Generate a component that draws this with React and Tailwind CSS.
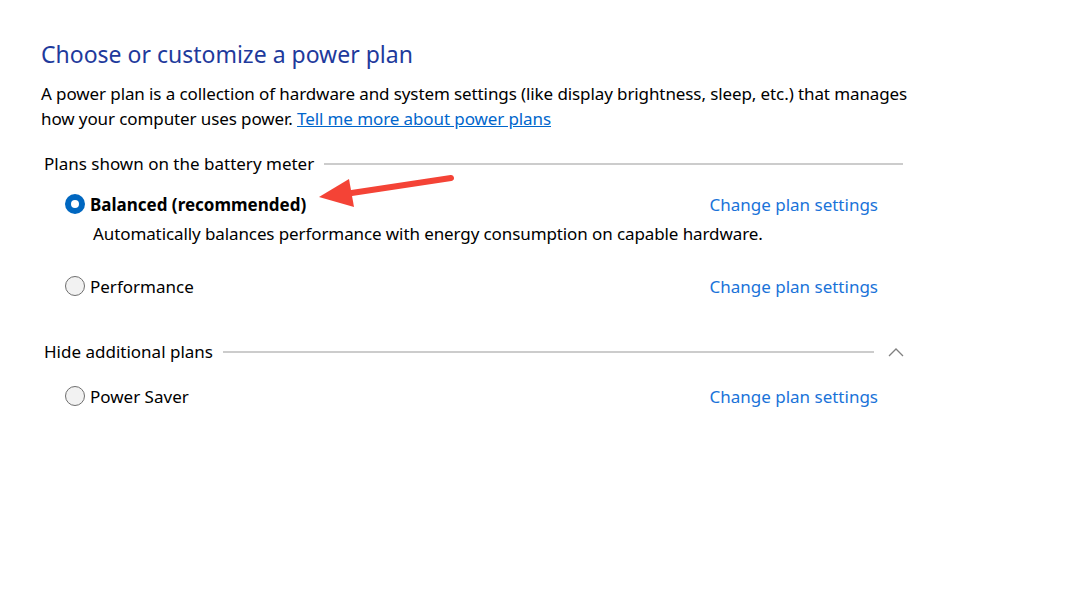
import React from 'react';

const plans = [
  { name: 'Balanced (recommended)', selected: true, desc: 'Automatically balances performance with energy consumption on capable hardware.' },
  { name: 'Performance', selected: false },
];

function Radio({ checked }) {
  if (checked) {
    return (
      <span className="flex h-[20px] w-[20px] shrink-0 items-center justify-center rounded-full bg-[#0067c0]">
        <span className="h-[8px] w-[8px] rounded-full bg-white" />
      </span>
    );
  }
  return <span className="h-[20px] w-[20px] shrink-0 rounded-full border border-[#6e6e6e] bg-[#f2f2f2]" />;
}

function PlanRow({ plan }) {
  return (
    <div>
      <div className="flex h-[28px] items-center pl-[24px] pr-[25px]">
        <Radio checked={plan.selected} />
        <span className={`ml-[5px] ${plan.selected ? 'font-bold' : ''}`}>{plan.name}</span>
        <a className="ml-auto text-[#1a73d9]" href="#">Change plan settings</a>
      </div>
      {plan.desc && <p className="mt-[3px] pl-[52px] tracking-[-0.1px]">{plan.desc}</p>}
    </div>
  );
}

export default function App() {
  return (
    <div className="relative h-[606px] w-[1077px] overflow-hidden bg-white font-['Segoe_UI','Noto_Sans',sans-serif] text-[17px] leading-[25px] text-black">
      <div className="w-[903px] pl-[41px] pt-[38px]">
        <h1 className="text-[23px] leading-[32px] text-[#1e3a9c]">Choose or customize a power plan</h1>
        <p className="mt-[11px] whitespace-nowrap tracking-[-0.1px]">
          A power plan is a collection of hardware and system settings (like display brightness, sleep, etc.) that manages
          <br />
          how your computer uses power. <a className="text-[#0066cc] underline" href="#">Tell me more about power plans</a>
        </p>

        <div className="mt-[20px] flex items-center pl-[3px]">
          <span>Plans shown on the battery meter</span>
          <span className="ml-[10px] h-[2px] flex-1 bg-[#cccccc]" />
        </div>

        <div className="mt-[14px] flex flex-col gap-[26px]">
          {plans.map(p => <PlanRow key={p.name} plan={p} />)}
        </div>

        <div className="mt-[39px] flex items-center pl-[3px]">
          <span>Hide additional plans</span>
          <span className="ml-[10px] h-[2px] flex-1 bg-[#cccccc]" />
          <svg className="ml-[14px] mr-[-1px]" width="16" height="10" viewBox="0 0 16 10">
            <path d="M1 9 L8 2 L15 9" fill="none" stroke="#808080" strokeWidth="1.3" />
          </svg>
        </div>

        <div className="mt-[18px]">
          <PlanRow plan={{ name: 'Power Saver', selected: false }} />
        </div>
      </div>

      <svg className="absolute left-0 top-0" width="1077" height="606">
        <line x1="451" y1="178" x2="345" y2="194" stroke="#f44336" strokeWidth="6" strokeLinecap="round" />
        <polygon points="319,197 349,179 354,207" fill="#f44336" />
      </svg>
    </div>
  );
}
